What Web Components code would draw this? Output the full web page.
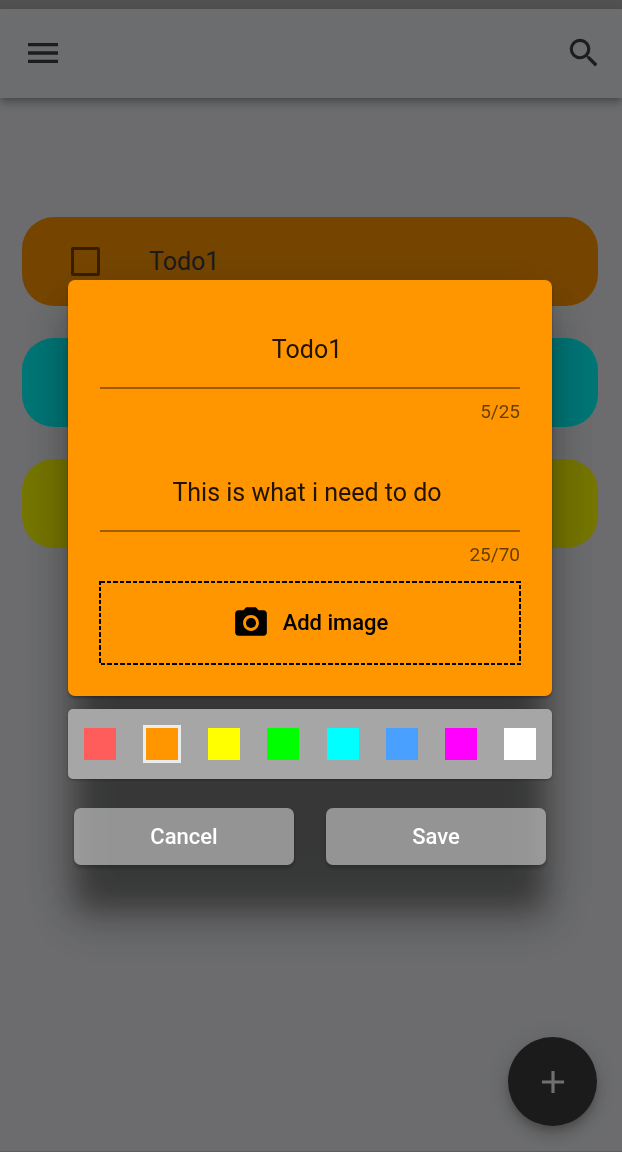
<!DOCTYPE html>
<html lang="en">
<head>
<meta charset="utf-8">
<meta name="viewport" content="width=device-width, initial-scale=1">
<title>Todo</title>
<style>
  html, body { height: 100%; }
  body { margin: 0; font-family: Roboto, "Liberation Sans", sans-serif; color: #3c3c3c; background: #ebecef; }
</style>
</head>
<body>
<todo-app>
  <todo-item color="#ff9600">Todo1</todo-item>
  <todo-item color="#00ffff"></todo-item>
  <todo-item color="#ffff00"></todo-item>
</todo-app>
<edit-dialog>
  <todo-editor>
    <text-field name="Title" value="Todo1" max="25"></text-field>
    <text-field name="Description" value="This is what i need to do" max="70"></text-field>
    <add-image>Add image</add-image>
  </todo-editor>
  <color-picker></color-picker>
  <dialog-button slot="actions">Cancel</dialog-button>
  <dialog-button slot="actions">Save</dialog-button>
</edit-dialog>

<script>
const define = (name, render, setup) => customElements.define(name, class extends HTMLElement {
  connectedCallback() {
    if (this.shadowRoot) return;
    this.attachShadow({ mode: 'open' }).innerHTML = '<style>*{box-sizing:border-box}</style>' + render(this);
    if (setup) setup(this, this.shadowRoot);
  }
});

define('app-bar', () => `
<style>
  :host { display: block; flex: none; position: relative; z-index: 1; }
  .status { height: 9px; background: #b2b2b4; }
  header { height: 89px; display: flex; align-items: center; justify-content: space-between; padding: 0 19px 2px 23px; background: #ebedf0; box-shadow: 0 3px 6px -1px rgba(0,0,0,.2), 0 6px 8px rgba(0,0,0,.12), 0 2px 16px rgba(0,0,0,.1); }
  button { border: 0; padding: 0; background: none; color: #404040; display: flex; }
  svg { width: 38px; height: 38px; fill: currentColor; }
  .menu { width: 40px; height: 40px; }
</style>
<div class="status"></div>
<header>
  <button aria-label="Menu"><svg class="menu" viewBox="0 0 24 24"><path d="M3 18h18v-2H3v2zm0-5h18v-2H3v2zm0-7v2h18V6H3z"/></svg></button>
  <button aria-label="Search"><svg viewBox="0 0 24 24"><path d="M15.5 14h-.79l-.28-.27A6.47 6.47 0 0 0 16 9.5 6.5 6.5 0 1 0 9.5 16c1.61 0 3.09-.59 4.23-1.57l.27.28v.79l5 4.99L20.49 19l-4.99-5zm-6 0C7.01 14 5 11.99 5 9.5S7.01 5 9.5 5 14 7.01 14 9.5 11.99 14 9.5 14z"/></svg></button>
</header>`);

define('todo-item', el => `
<style>
  :host { display: block; }
  label { display: flex; align-items: center; gap: 49px; height: 89px; padding: 0 49px; border-radius: 32px; background: ${el.getAttribute('color')}; font-size: 25px; line-height: 32px; }
  input { appearance: none; flex: none; width: 29px; height: 29px; margin: 0; border: 3px solid rgba(0,0,0,.54); border-radius: 2px; }
</style>
<label><input type="checkbox"><slot></slot></label>`);

define('add-button', () => `
<style>
  :host { position: fixed; right: 25px; bottom: 26px; }
  button { display: grid; place-items: center; width: 89px; height: 89px; border: 0; padding: 0; border-radius: 50%; background: #3b3b3b; color: #f5f5f5; box-shadow: 0 5px 8px -2px rgba(0,0,0,.2), 0 10px 16px rgba(0,0,0,.14), 0 2px 28px rgba(0,0,0,.12); }
  svg { width: 38px; height: 38px; fill: currentColor; }
</style>
<button aria-label="Add todo"><svg viewBox="0 0 24 24"><path d="M19 13h-6v6h-2v-6H5v-2h6V5h2v6h6v2z"/></svg></button>`);

define('todo-app', () => `
<style>
  :host { display: flex; flex-direction: column; min-height: 100%; border-bottom: 1px solid #d0c8cc; box-sizing: border-box; }
  main { flex: 1; display: flex; flex-direction: column; gap: 32px; padding: 119px 24px 32px 22px; }
</style>
<app-bar></app-bar>
<main><slot></slot></main>
<add-button></add-button>`);

define('text-field', el => `
<style>
  :host { display: flex; flex-direction: column; gap: 12px; }
  input { width: 100%; height: 57px; padding: 0 6px 20px 0; border: 0; border-bottom: 2px solid rgba(0,0,0,.38); border-radius: 0; background: none; outline: 0; font: 25px/35px Roboto, "Liberation Sans", sans-serif; color: rgba(0,0,0,.87); text-align: center; }
  output { font-size: 19px; line-height: 22px; text-align: right; color: rgba(0,0,0,.6); }
</style>
<input id="f" type="text" aria-label="${el.getAttribute('name')}" maxlength="${el.getAttribute('max')}" value="${el.getAttribute('value')}">
<output for="f"></output>`, (el, root) => {
  const input = root.querySelector('input'), out = root.querySelector('output');
  const count = () => { out.textContent = input.value.length + '/' + input.maxLength; };
  input.addEventListener('input', count);
  count();
});

define('add-image', () => `
<style>
  :host { display: block; }
  button { position: relative; display: flex; align-items: center; justify-content: center; gap: 13px; width: 100%; height: 84px; border: 0; padding: 0; background: none; color: #000; font: 500 22px/32px Roboto, "Liberation Sans", sans-serif; }
  .outline { position: absolute; inset: 0; width: 100%; height: 100%; }
  .outline rect { x: 1px; y: 1px; width: calc(100% - 2px); height: calc(100% - 2px); fill: none; stroke: #000; stroke-width: 2px; stroke-dasharray: 5 2 4 2; }
  .icon { width: 38px; height: 38px; }
</style>
<button>
  <svg class="outline" aria-hidden="true"><rect/></svg>
  <svg class="icon" viewBox="0 0 24 24" aria-hidden="true"><circle cx="12" cy="12" r="3.2"/><path d="M9 2 7.17 4H4c-1.1 0-2 .9-2 2v12c0 1.1.9 2 2 2h16c1.1 0 2-.9 2-2V6c0-1.1-.9-2-2-2h-3.17L15 2H9zm3 15c-2.76 0-5-2.24-5-5s2.24-5 5-5 5 2.24 5 5-2.24 5-5 5z"/></svg>
  <span><slot></slot></span>
</button>`);

define('todo-editor', () => `
<style>
  :host { display: block; padding: 52px 31px 31px; border-radius: 7px; background: #ff9600; box-shadow: 0 2px 3px rgba(0,0,0,.3); }
  ::slotted(text-field) { margin: 0 1px; }
  ::slotted(text-field:nth-child(2)) { margin-top: 52px; }
  ::slotted(add-image) { margin-top: 15px; }
</style>
<slot></slot>`);

define('color-picker', () => {
  const colors = { Red: '#ff5c5c', Orange: '#ff9600', Yellow: '#ffff00', Green: '#00ff00', Cyan: '#00ffff', Blue: '#4aa0ff', Magenta: '#ff00ff', White: '#ffffff' };
  return `
<style>
  :host { display: block; }
  fieldset { display: flex; align-items: center; justify-content: space-between; height: 70px; margin: 0; border: 0; padding: 0 16px; border-radius: 5px; background: #a6a6a6; box-shadow: 0 1px 3px rgba(0,0,0,.3); }
  input { appearance: none; flex: none; width: 32px; height: 32px; margin: 0; }
  input:checked { width: 38px; height: 38px; border: 3px solid #ececec; }
</style>
<fieldset aria-label="Color">${Object.entries(colors).map(([n, c]) =>
  `<input type="radio" name="color" aria-label="${n}" style="background:${c}"${n === 'Orange' ? ' checked' : ''}>`).join('')}</fieldset>`;
});

define('dialog-button', () => `
<style>
  :host { display: block; flex: 1; }
  button { width: 100%; height: 57px; border: 0; padding: 0; border-radius: 7px; background: rgba(178,178,178,.76); color: #fff; font: 500 22px/32px Roboto, "Liberation Sans", sans-serif; box-shadow: 0 3px 4px rgba(0,0,0,.25); }
</style>
<button><slot></slot></button>`);

define('edit-dialog', () => `
<style>
  :host { position: fixed; inset: 0; z-index: 2; display: flex; flex-direction: column; justify-content: center; padding: 9px 70px 0 68px; box-sizing: border-box; background: rgba(0,0,0,.54); }
  section { position: relative; display: flex; flex-direction: column; gap: 13px; padding-bottom: 16px; }
  .shade { position: absolute; border-radius: 8px; pointer-events: none; }
  .umbra { inset: 33px 10px -26px; background: rgba(0,0,0,.33); filter: blur(14px); }
  .penumbra { inset: 33px -3px -46px; background: rgba(0,0,0,.19); filter: blur(24px); }
  .ambient { inset: 1px -8px -30px; background: rgba(0,0,0,.08); filter: blur(30px); }
  .content { position: relative; display: flex; flex-direction: column; gap: 13px; }
  footer { display: flex; gap: 32px; padding: 16px 6px 0; }
</style>
<section role="dialog" aria-label="Edit todo">
  <div class="shade ambient"></div><div class="shade penumbra"></div><div class="shade umbra"></div>
  <div class="content"><slot></slot><footer><slot name="actions"></slot></footer></div>
</section>`);
</script>
</body>
</html>
